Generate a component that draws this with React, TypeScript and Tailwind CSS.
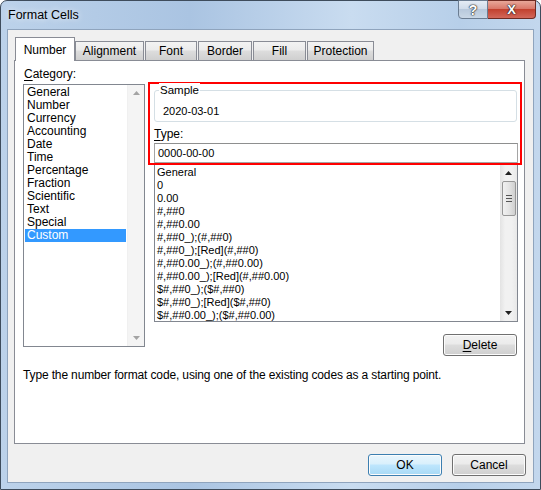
import React from "react";

const cats = ["General","Number","Currency","Accounting","Date","Time","Percentage","Fraction","Scientific","Text","Special","Custom"];
const fmts = ["General","0","0.00","#,##0","#,##0.00","#,##0_);(#,##0)","#,##0_);[Red](#,##0)","#,##0.00_);(#,##0.00)","#,##0.00_);[Red](#,##0.00)","$#,##0_);($#,##0)","$#,##0_);[Red]($#,##0)","$#,##0.00_);($#,##0.00)"];

function Tri({ up, color }: { up?: boolean; color: string }) {
  return (
    <svg width="7" height="4" viewBox="0 0 7 4">
      {up ? <polygon points="0,4 7,4 3.5,0" fill={color} /> : <polygon points="0,0 7,0 3.5,4" fill={color} />}
    </svg>
  );
}

function Tab({ label, w, selected }: { label: string; w: number; selected?: boolean }) {
  if (selected) {
    return (
      <div style={{ width: w }} className="relative z-10 h-[24px] -mb-[1px] border border-b-0 border-[#898c95] bg-white flex items-start justify-center pt-[4px] text-[12px] leading-[16px]">
        {label}
      </div>
    );
  }
  return (
    <div style={{ width: w }} className="h-[19px] border border-b-0 border-[#898c95] bg-[linear-gradient(#f3f3f3,#ebebeb_45%,#dddddd_50%,#cfcfcf)] flex items-center justify-center text-[12px] leading-[16px]">
      {label}
    </div>
  );
}

function Btn({ children, w, def }: { children: React.ReactNode; w: number; def?: boolean }) {
  return (
    <div
      style={{ width: w }}
      className={
        "h-[22px] rounded-[3px] border flex items-center justify-center text-[12px] leading-[16px] shadow-[inset_0_0_0_1px_#fcfcfc] " +
        (def
          ? "border-[#3c7fb1] bg-[linear-gradient(#eaf6fd,#d9f0fc_45%,#bee6fd_50%,#a7d9f5)]"
          : "border-[#707070] bg-[linear-gradient(#f2f2f2,#ebebeb_45%,#dddddd_50%,#cfcfcf)]")
      }
    >
      {children}
    </div>
  );
}

export default function App() {
  return (
    <div className="w-[541px] h-[490px] bg-white font-['Liberation_Sans',Arial,sans-serif] text-black">
      <div className="w-[541px] h-[490px] flex flex-col rounded-t-[7px] border border-[#3e4c5c] bg-[linear-gradient(90deg,#bcd2ea,#aac4e2_35%,#c9dcf0_65%,#b7cfe9_85%,#c3d7ed)]">
        {/* Title bar */}
        <div className="h-[28px] flex items-start">
          <span className="pl-[7px] pt-[6px] text-[12.5px] leading-[16px] [text-shadow:0_0_6px_#ffffff]">Format Cells</span>
          <div className="ml-auto mr-[4px] -mt-[1px] flex">
            <div className="w-[30px] h-[19px] rounded-bl-[4px] border border-[#6b7d92] bg-[linear-gradient(#e4ecf5,#d0dcea_45%,#b8c9dc_50%,#c9d7e6)] flex items-center justify-center text-[14px] font-bold leading-none text-white [text-shadow:0_0_1px_#222,0_0_1px_#222,0_0_2px_#333]">
              ?
            </div>
            <div className="w-[48px] h-[19px] rounded-br-[4px] border border-l-0 border-[#6e2a22] bg-[linear-gradient(#e8a799,#d9786a_45%,#c2412f_50%,#d2675a)] flex items-center justify-center text-[13px] font-bold leading-none text-white [text-shadow:0_0_1px_#222,0_0_1px_#222,0_0_2px_#333]">
              X
            </div>
          </div>
        </div>

        {/* Client area */}
        <div className="ml-[6px] w-[527px] h-[454px] border border-[#8fa4bd] bg-[#f0f0f0] flex flex-col">
          {/* Tabs */}
          <div className="ml-[7px] mt-[7px] h-[23px] flex items-end">
            <Tab label="Number" w={60} selected />
            <Tab label="Alignment" w={69} />
            <div className="w-[1px]" />
            <Tab label="Font" w={52} />
            <div className="w-[1px]" />
            <Tab label="Border" w={54} />
            <div className="w-[1px]" />
            <Tab label="Fill" w={53} />
            <div className="w-[1px]" />
            <Tab label="Protection" w={67} />
          </div>

          {/* Panel */}
          <div className="ml-[6px] w-[511px] h-[384px] border border-[#898c95] bg-white flex flex-col">
            <div className="flex items-start">
              {/* Left column */}
              <div className="ml-[8px] w-[122px] flex flex-col">
                <div className="mt-[5px] h-[16px] leading-[16px] pl-[1px] text-[12px]">
                  <span className="underline underline-offset-2">C</span>ategory:
                </div>
                <div className="mt-[2px] h-[263px] border border-[#828790] bg-white flex">
                  <div className="flex-1 pt-[1px] flex flex-col">
                    {cats.map((c) => (
                      <div
                        key={c}
                        className={
                          "mx-[1px] h-[13px] leading-[13px] pl-[2px] text-[12px] " +
                          (c === "Custom" ? "bg-[#3399ff] text-white" : "")
                        }
                      >
                        {c}
                      </div>
                    ))}
                  </div>
                  <div className="w-[17px] bg-[#f4f4f4] border-l border-[#f0f0f0] flex flex-col items-center justify-between py-[6px]">
                    <Tri up color="#a3a3a3" />
                    <Tri color="#a3a3a3" />
                  </div>
                </div>
              </div>

              {/* Right column */}
              <div className="ml-[3px] mt-[21px] w-[374px] flex flex-col">
                <div className="relative z-10 h-[83px] border-2 border-[#ff0000] flex flex-col">
                  <div className="relative ml-[4px] mt-[6px] w-[363px] h-[32px] rounded-[3px] border border-[#d5dfe5]">
                    <span className="absolute left-[4px] -top-[8px] px-[1px] bg-white text-[11.5px] leading-[14px]">Sample</span>
                    <div className="pl-[8px] pt-[12px] text-[11px] leading-[16px]">2020-03-01</div>
                  </div>
                  <div className="ml-[4px] mt-[4px] h-[16px] leading-[16px] text-[12px]">
                    <span className="underline underline-offset-2">T</span>ype:
                  </div>
                  <div className="ml-[4px] mt-[1px] w-[364px] h-[20px] border border-[#a5a5a5] border-t-[#8e8f8f] bg-white pl-[3px] text-[11px] leading-[18px]">
                    0000-00-00
                  </div>
                </div>
                <div className="ml-[6px] -mt-[1px] w-[364px] h-[158px] border border-[#828790] bg-white flex overflow-hidden">
                  <div className="flex-1 pt-[1px] flex flex-col">
                    {fmts.map((f) => (
                      <div key={f} className="h-[13px] leading-[13px] pl-[2px] text-[11px] whitespace-nowrap">
                        {f}
                      </div>
                    ))}
                  </div>
                  <div className="w-[17px] bg-[linear-gradient(90deg,#e3e3e3,#f1f1f1_30%,#f1f1f1_70%,#e8e8e8)] flex flex-col items-center pt-[6px] pb-[6px]">
                    <Tri up color="#202020" />
                    <div className="mt-[6px] w-[14px] h-[35px] rounded-[2px] border border-[#979797] bg-[linear-gradient(90deg,#f1f1f1,#e4e4e4_50%,#cfcfcf)] flex flex-col items-center justify-center gap-[2px]">
                      <div className="w-[6px] h-[1px] bg-[#555]" />
                      <div className="w-[6px] h-[1px] bg-[#555]" />
                      <div className="w-[6px] h-[1px] bg-[#555]" />
                    </div>
                    <div className="mt-auto">
                      <Tri color="#202020" />
                    </div>
                  </div>
                </div>
                <div className="self-end mr-[5px] mt-[12px]">
                  <Btn w={74}>
                    <span>
                      <span className="underline underline-offset-2">D</span>elete
                    </span>
                  </Btn>
                </div>
              </div>
            </div>
            <div className="ml-[8px] mt-[11px] text-[12px] leading-[16px] tracking-[-0.14px]">
              Type the number format code, using one of the existing codes as a starting point.
            </div>
          </div>

          {/* Bottom buttons */}
          <div className="mt-[10px] mr-[7px] flex justify-end gap-[10px]">
            <Btn w={74} def>OK</Btn>
            <Btn w={74}>Cancel</Btn>
          </div>
        </div>
      </div>
    </div>
  );
}
